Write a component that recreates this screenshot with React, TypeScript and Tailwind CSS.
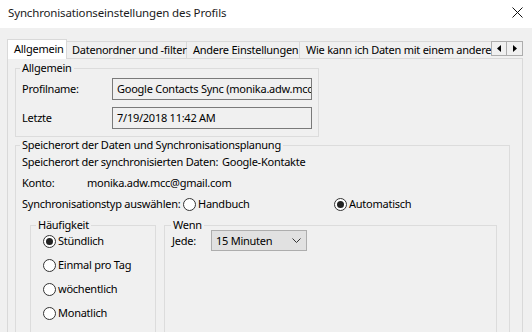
import React from 'react'

function Radio({ checked, label }: { checked?: boolean; label: string }) {
  return (
    <div className="flex items-center gap-[2px] h-[16px]">
      <span className="w-[13px] h-[13px] rounded-full border border-[#333] bg-white flex items-center justify-center shrink-0">
        {checked && <span className="w-[7px] h-[7px] rounded-full bg-[#222]" />}
      </span>
      <span>{label}</span>
    </div>
  )
}

export default function App() {
  return (
    <div className="w-[532px] h-[332px] overflow-hidden bg-[#f0f0f0] text-[11px] leading-[16px] tracking-[-0.25px] text-black font-['Noto_Sans',sans-serif]">
      {/* title bar */}
      <div className="h-[28px] bg-white flex items-start justify-between pl-[8px] pr-[9px] pt-[5px]">
        <span className="text-[#1a1a1a] text-[11.5px] tracking-[-0.15px]">Synchronisationseinstellungen des Profils</span>
        <svg width="11" height="11" viewBox="0 0 11 11" className="mt-[2px]">
          <path d="M0.5 0.5 L10.5 10.5 M10.5 0.5 L0.5 10.5" stroke="#111" strokeWidth="1" />
        </svg>
      </div>

      <div className="h-[10px]" />

      {/* tabs */}
      <div className="relative ml-[7px] w-[516px] h-[20px] flex items-end">
        <div className="relative z-10 -mb-px w-[60px] h-[20px] bg-white border border-b-0 border-[#d9d9d9] pl-[6px] pt-[1px]">
          Allgemein
        </div>
        <div className="w-[120px] h-[17px] border-t border-r border-[#d9d9d9] pl-[5px] whitespace-nowrap">
          Datenordner und -filter
        </div>
        <div className="w-[113px] h-[17px] border-t border-r border-[#d9d9d9] pl-[6px] whitespace-nowrap">
          Andere Einstellungen
        </div>
        <div className="w-[192px] h-[17px] border-t border-[#d9d9d9] pl-[6px] whitespace-nowrap overflow-hidden">
          Wie kann ich Daten mit einem anderen Profil synchronisieren?
        </div>
        {/* scroll arrows */}
        <div className="absolute left-[484px] top-[3px] flex">
          <div className="w-[16px] h-[15px] bg-[#f0f0f0] border border-[#adadad] flex items-center justify-center">
            <svg width="4" height="7" viewBox="0 0 4 7">
              <path d="M4 0 L0 3.5 L4 7 Z" fill="#000" />
            </svg>
          </div>
          <div className="w-[16px] h-[15px] bg-[#f0f0f0] border border-l-0 border-[#adadad] flex items-center justify-center">
            <svg width="4" height="7" viewBox="0 0 4 7">
              <path d="M0 0 L4 3.5 L0 7 Z" fill="#000" />
            </svg>
          </div>
        </div>
      </div>

      {/* tab page */}
      <div className="ml-[7px] w-[516px] h-[300px] border border-[#d9d9d9] pt-[1px] pl-[7px]">
        <fieldset className="w-[304px] border border-[#dcdcdc] pl-[6px] pr-[5px] pt-[2px] pb-[7px]">
          <legend className="ml-[-2px] px-[2px]">Allgemein</legend>
          <div className="flex items-center h-[22px]">
            <span className="w-[90px]">Profilname:</span>
            <div className="w-[200px] h-[22px] border border-[#7a7a7a] bg-[#f0f0f0] pl-[4px] flex items-center overflow-hidden whitespace-nowrap">
              Google Contacts Sync (monika.adw.mcc@gmail.com)
            </div>
          </div>
          <div className="flex items-center h-[22px] mt-[7px]">
            <span className="w-[90px]">Letzte</span>
            <div className="w-[200px] h-[22px] border border-[#7a7a7a] bg-[#f0f0f0] pl-[4px] flex items-center overflow-hidden whitespace-nowrap">
              7/19/2018 11:42 AM
            </div>
          </div>
        </fieldset>

        <fieldset className="w-[495px] h-[260px] border border-[#dcdcdc] pl-[6px] pt-[1px]">
          <legend className="ml-[-2px] px-[2px]">Speicherort der Daten und Synchronisationsplanung</legend>
          <div className="flex h-[16px] whitespace-nowrap">
            <span className="w-[200px]">Speicherort der synchronisierten Daten:</span>
            <span>Google-Kontakte</span>
          </div>
          <div className="flex h-[16px] mt-[5px] whitespace-nowrap">
            <span className="w-[65px]">Konto:</span>
            <span>monika.adw.mcc@gmail.com</span>
          </div>
          <div className="flex items-center h-[16px] mt-[5px] whitespace-nowrap">
            <span className="w-[161px]">Synchronisationstyp auswählen:</span>
            <div className="w-[151px]">
              <Radio label="Handbuch" />
            </div>
            <Radio checked label="Automatisch" />
          </div>

          <div className="flex gap-[8px] mt-[5px] ml-[8px]">
            <fieldset className="w-[126px] h-[140px] border border-[#dcdcdc] pl-[12px]">
              <legend className="ml-[-7px] px-[2px]">Häufigkeit</legend>
              <div className="flex flex-col gap-[8px]">
                <Radio checked label="Stündlich" />
                <Radio label="Einmal pro Tag" />
                <Radio label="wöchentlich" />
                <Radio label="Monatlich" />
              </div>
            </fieldset>
            <fieldset className="w-[333px] h-[140px] border border-[#dcdcdc] pl-[7px]">
              <legend className="ml-[-1px] px-[2px]">Wenn</legend>
              <div className="flex items-center h-[21px] -mt-[3px]">
                <span className="w-[39px]">Jede:</span>
                <div className="w-[96px] h-[21px] bg-[#e1e1e1] border border-[#adadad] flex items-center justify-between pl-[4px] pr-[5px]">
                  <span>15 Minuten</span>
                  <svg width="9" height="5" viewBox="0 0 9 5">
                    <path d="M0.5 0.5 L4.5 4.5 L8.5 0.5" stroke="#333" strokeWidth="1" fill="none" />
                  </svg>
                </div>
              </div>
            </fieldset>
          </div>
        </fieldset>
      </div>
    </div>
  )
}
